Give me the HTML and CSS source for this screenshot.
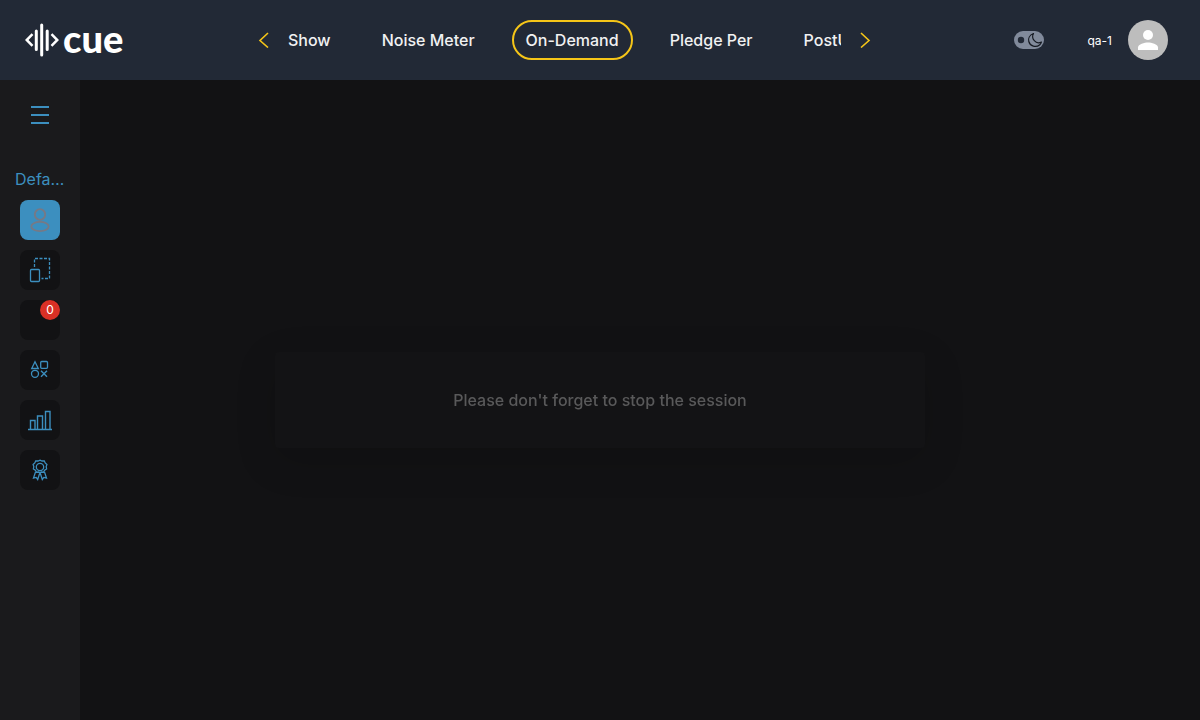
FILE: index.html
```html
<!DOCTYPE html>
<html lang="en">
<head>
<meta charset="utf-8">
<title>Cue</title>
<link rel="stylesheet" href="styles.css">
</head>
<body>
<header class="topbar">
  <a class="logo" href="#" aria-label="cue">
    <svg class="logo-mark" viewBox="0 0 34 34" fill="none" stroke="#fff" stroke-linecap="round">
      <path stroke-width="3" d="M16.700 2v30M11.300 8v18.500M22.200 8v18.500"/>
      <path stroke-width="2.500" stroke-linecap="butt" d="M7.500 11.200L1.700 17l5.800 5.800M26.500 11.200L32.300 17l-5.800 5.800"/>
    </svg>
    <span class="logo-name">cue</span>
  </a>
  <nav class="tabs">
    <button class="arrow" aria-label="Previous"><svg viewBox="0 0 16 16"><path d="M12 1L4 8.500l8 7"/></svg></button>
    <div class="tab-strip">
      <button class="tab tab-first">Show</button>
      <button class="tab">Noise Meter</button>
      <button class="tab tab-active">On-Demand</button>
      <button class="tab">Pledge Per</button>
      <button class="tab">PostU</button>
    </div>
    <button class="arrow" aria-label="Next"><svg viewBox="0 0 16 16"><path d="M4 1l8 7.500-8 7"/></svg></button>
  </nav>
  <div class="account">
    <button class="theme" aria-label="Dark theme">
      <svg viewBox="0 0 30 18"><circle cx="7" cy="9" r="3.200" fill="#222936"/><path fill="none" stroke="#161a22" stroke-width="1.200" stroke-linejoin="round" d="M19.500 2.500C15.500 4 14 7.500 14.800 10.500c1.200 4.800 7.200 6.500 11 3.200.9-.8 1.500-1.700 1.700-2.700-2.300 1.200-5.400.8-7.200-1.300-1.900-2.100-2-5.100-.8-7.200z"/></svg>
    </button>
    <span class="user">qa-1</span>
    <button class="avatar" aria-label="Profile"><svg viewBox="0 0 40 40" fill="#fff"><circle cx="20" cy="15" r="5"/><path d="M10 30v-2.500c0-3.300 6.700-5 10-5s10 1.700 10 5V30z"/></svg></button>
  </div>
</header>
<div class="body">
  <aside class="sidebar">
    <button class="menu" aria-label="Menu"><svg viewBox="0 0 18 18"><path d="M0 1h18M0 9h18M0 17h18"/></svg></button>
    <span class="group">Default</span>
    <div class="tools">
      <button class="tool tool-active" aria-label="Users"><svg viewBox="0 0 40 40"><ellipse cx="20" cy="14.500" rx="5.200" ry="5.300"/><ellipse cx="20" cy="26.500" rx="8.700" ry="4.600"/></svg></button>
      <button class="tool" aria-label="Devices"><svg viewBox="0 0 40 40"><rect x="10.500" y="19.500" width="9" height="12" rx="1"/><path stroke-dasharray="3 1.500" d="M14.500 17V8.500h15v20h-8"/></svg></button>
      <button class="tool" aria-label="Notifications, 0"><span class="badge">0</span></button>
      <button class="tool" aria-label="Shapes"><svg viewBox="0 0 40 40"><path d="M15 11.700l3.300 6.800h-6.600z"/><rect x="20.700" y="11.500" width="6.800" height="6.800" rx="1"/><circle cx="15" cy="23.800" r="3.500"/><path stroke-width="1.400" d="M21 20.800l6 6M27 20.800l-6 6"/></svg></button>
      <button class="tool" aria-label="Statistics"><svg viewBox="0 0 40 40"><path stroke-width="1.400" d="M8 29.500h24M10.500 29v-8.500h4.500V29M17.500 29V16h5v13M25.500 29V11.500h4.500V29"/></svg></button>
      <button class="tool" aria-label="Rewards"><svg viewBox="0 0 40 40"><circle cx="20" cy="17" r="3.700"/><path d="M20 10.200l2 .8 2.300-.1.900 2 1.700 1.500-.7 2.200.4 2.300-1.900 1.300-1.200 2-2.300-.2-1.200 1-1.200-1-2.300.2-1.200-2-1.900-1.300.4-2.300-.7-2.200 1.700-1.500.9-2 2.300.1zM15.500 22l-2 6 2.700-.6 1.500 2.100 2-6.200M24.500 22l2 6-2.700-.6-1.500 2.100-2-6.200"/></svg></button>
    </div>
  </aside>
  <main class="stage"></main>
</div>
<div class="notice" role="status">Please don't forget to stop the session</div>
</body>
</html>
```
FILE: styles.css
```css
* { box-sizing: border-box; }
body {
  margin: 0;
  min-height: 100vh;
  display: flex;
  flex-direction: column;
  background: #121214;
  color: #f1f1f2;
  font-family: Inter, sans-serif;
  font-size: 16px;
}
button {
  padding: 0;
  border: 0;
  background: none;
  color: inherit;
  font: inherit;
  cursor: pointer;
}
svg { display: block; }
.topbar {
  display: grid;
  grid-template-columns: 256px minmax(0, 620px) 1fr;
  align-items: center;
  height: 80px;
  background: #222936;
}
.logo {
  display: flex;
  align-items: center;
  gap: 4px;
  padding-left: 25px;
  color: #fff;
  text-decoration: none;
}
.logo-mark { width: 34px; height: 34px; }
.logo-name {
  height: 34px;
  font: 900 38px/30px Lato, sans-serif;
}
.tabs { display: flex; align-items: center; }
.arrow { flex: none; }
.arrow svg {
  width: 16px;
  height: 16px;
  fill: none;
  stroke: #f5c518;
  stroke-width: 1.6;
}
.tab-strip {
  display: flex;
  flex: 0 1 553px;
  gap: 23px;
  margin: 0 16px;
  overflow: hidden;
}
.tab {
  flex: none;
  height: 40px;
  padding: 0 12px;
  border: 2px solid transparent;
  border-radius: 20px;
  font-weight: 500;
}
.tab-first { padding-left: 0; border-left: 0; }
.tab-active { border-color: #f5c518; }
.account {
  display: flex;
  align-items: center;
  justify-content: flex-end;
  padding-right: 32px;
}
.theme {
  width: 30px;
  height: 18px;
  margin-right: 44px;
  border-radius: 9px;
  background: #818a9b;
}
.user { margin-right: 16px; font-size: 12px; color: #fff; }
.avatar {
  width: 40px;
  height: 40px;
  overflow: hidden;
  border-radius: 50%;
  background: #bdbdbd;
}
.body { display: flex; flex: 1; }
.sidebar {
  display: flex;
  flex-direction: column;
  align-items: center;
  width: 80px;
  padding-top: 26px;
  background: #1a1a1c;
}
.menu svg {
  width: 18px;
  height: 18px;
  stroke: #3c8fbf;
  stroke-width: 2;
}
.group {
  width: 50px;
  margin: 45px 0 11px;
  overflow: hidden;
  color: #3c8fbf;
  line-height: 20px;
  text-overflow: ellipsis;
  white-space: nowrap;
}
.tools { display: grid; gap: 10px; }
.tool {
  position: relative;
  width: 40px;
  height: 40px;
  border-radius: 8px;
  background: #121214;
}
.tool svg { fill: none; stroke: #3c8fbf; stroke-width: 1.3; }
.tool-active { background: #3c8fbf; }
.tool-active svg { stroke: #777985; stroke-width: 1.8; }
.badge {
  position: absolute;
  top: 0;
  right: 0;
  width: 20px;
  border-radius: 50%;
  background: #d93025;
  color: #fff;
  font-size: 12px;
  line-height: 20px;
}
.stage { flex: 1; }
.notice {
  position: fixed;
  top: 352px;
  left: 50%;
  width: min(650px, 90vw);
  padding: 38px 24px;
  transform: translateX(-50%);
  border-radius: 4px;
  background: #131315;
  box-shadow: 0 12px 40px rgba(0, 0, 0, 0.15);
  color: #59595a;
  font-weight: 500;
  line-height: 20px;
  text-align: center;
}
```
